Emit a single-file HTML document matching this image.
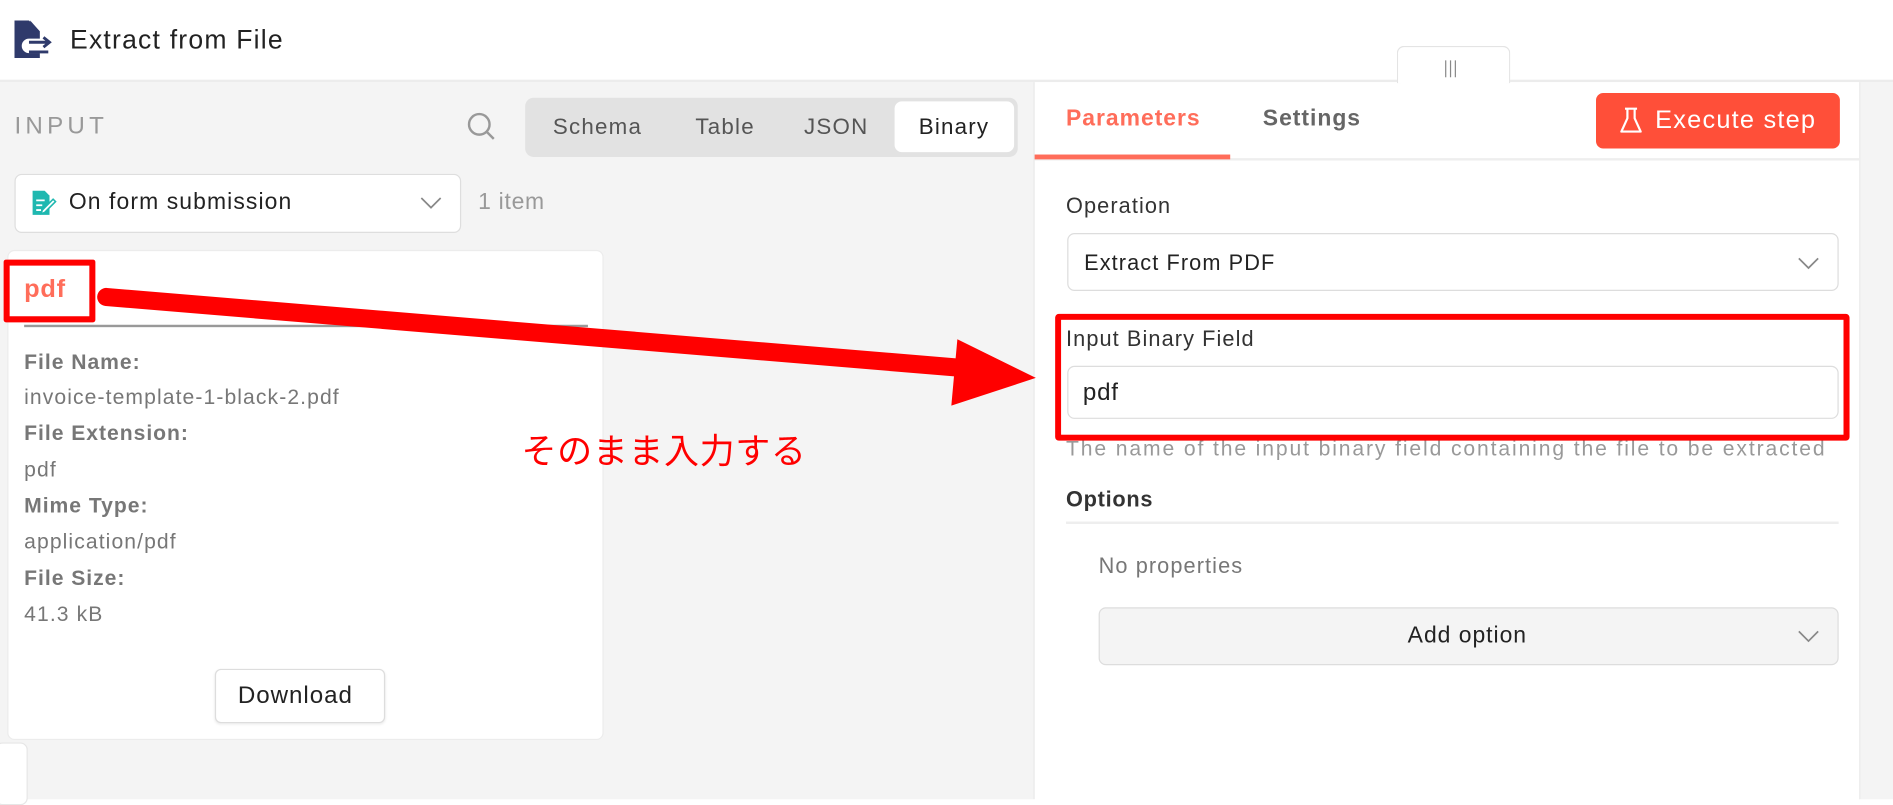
<!DOCTYPE html>
<html><head><meta charset="utf-8"><style>
html,body{margin:0;padding:0;width:1893px;height:799px;overflow:hidden;background:#fff}
#s{position:absolute;left:0;top:0;width:1568px;height:662px;transform:scale(1.20727);transform-origin:0 0;font-family:"Liberation Sans","Noto Sans CJK JP",sans-serif;color:#333;letter-spacing:0.6px}
.a{position:absolute;white-space:nowrap}
.c{transform:translateY(-50%)}
.lab{color:#777;font-weight:bold;font-size:17.5px;letter-spacing:0.8px}
.val{color:#777;font-size:17.5px;letter-spacing:0.9px}
</style></head><body><div id="s">
<svg class="a" style="left:10px;top:16px" width="38" height="34" viewBox="0 0 38 34">
<path d="M2 1h12l9 9v6h-9a6 6 0 0 0 0 12h9v4H2z" fill="#2f3a6b"/>
<path d="M15 1v9h8z" fill="#2f3a6b"/>
<path d="M14 19h16M26 15l5 4-5 4M30 27H14" stroke="#2f3a6b" stroke-width="2.4" fill="none"/>
</svg>
<div class="a c" style="left:58px;top:33px;font-size:22px;color:#222;letter-spacing:1px">Extract from File</div>
<div class="a" style="left:0;top:66px;width:1568px;height:2px;background:#ececec"></div>
<div class="a" style="left:1157px;top:38px;width:92px;height:30px;background:#fff;border:1px solid #e4e4e4;border-bottom:none;border-radius:6px 6px 0 0"></div>
<div class="a" style="left:1197px;top:50px;width:1px;height:14px;background:#888;box-shadow:4px 0 #888,8px 0 #888"></div>
<div class="a" style="left:0;top:68px;width:856px;height:594px;background:#f4f4f4"></div>
<div class="a c" style="left:12px;top:105px;font-size:20px;letter-spacing:3.5px;color:#999">INPUT</div>
<svg class="a" style="left:386px;top:92px" width="26" height="26" viewBox="0 0 26 26"><circle cx="11" cy="11" r="8.5" stroke="#999" stroke-width="2" fill="none"/><path d="M17 17l6 6" stroke="#999" stroke-width="2"/></svg>
<div class="a" style="left:435px;top:81px;width:408px;height:49px;background:#e2e2e2;border-radius:7px"></div>
<div class="a" style="left:741px;top:84px;width:99px;height:42px;background:#fff;border-radius:6px"></div>
<div class="a c" style="left:458px;top:105px;font-size:18.5px;color:#555;letter-spacing:1px">Schema</div>
<div class="a c" style="left:576px;top:105px;font-size:18.5px;color:#555;letter-spacing:1px">Table</div>
<div class="a c" style="left:666px;top:105px;font-size:18.5px;color:#555;letter-spacing:1px">JSON</div>
<div class="a c" style="left:761px;top:105px;font-size:18.5px;color:#222;letter-spacing:1px">Binary</div>
<div class="a" style="left:12px;top:144px;width:368px;height:47px;background:#fff;border:1px solid #dedede;border-radius:6px"></div>
<svg class="a" style="left:26px;top:157px" width="22" height="22" viewBox="0 0 22 22"><path d="M1 1h10l4 4v16H1z" fill="#1fb8b0"/><path d="M4 9h7M4 13h5M4 17h4" stroke="#fff" stroke-width="1.5"/><path d="M9 17l9-9 2 2-9 9-3 1z" fill="#fff" stroke="#1fb8b0" stroke-width="1.3"/></svg>
<div class="a c" style="left:57px;top:168px;font-size:19px;color:#222;letter-spacing:0.9px">On form submission</div>
<svg class="a" style="left:348px;top:162px" width="18" height="12"><path d="M1 2l8 8 8-8" stroke="#888" stroke-width="1.4" fill="none"/></svg>
<div class="a c" style="left:396px;top:168px;font-size:19px;color:#999">1 item</div>
<div class="a" style="left:6px;top:207px;width:494px;height:406px;background:#fff;border:1px solid #ececec;border-radius:6px;box-sizing:border-box"></div>
<div class="a c" style="left:20px;top:240px;font-size:21px;color:#ff6d5a;font-weight:bold">pdf</div>
<div class="a" style="left:20px;top:269px;width:467px;height:2px;background:#999"></div>
<div class="a c lab" style="left:20px;top:300px">File Name:</div>
<div class="a c val" style="left:20px;top:329px">invoice-template-1-black-2.pdf</div>
<div class="a c lab" style="left:20px;top:359px">File Extension:</div>
<div class="a c val" style="left:20px;top:389px">pdf</div>
<div class="a c lab" style="left:20px;top:419px">Mime Type:</div>
<div class="a c val" style="left:20px;top:449px">application/pdf</div>
<div class="a c lab" style="left:20px;top:479px">File Size:</div>
<div class="a c val" style="left:20px;top:509px">41.3 kB</div>
<div class="a" style="left:178px;top:554px;width:141px;height:45px;background:#fff;border:1px solid #ddd;border-radius:5px;box-sizing:border-box;box-shadow:0 1px 2px rgba(0,0,0,.08)"></div>
<div class="a c" style="left:197px;top:577px;font-size:20px;color:#222;letter-spacing:0.8px">Download</div>
<div class="a" style="left:-4px;top:615px;width:25px;height:50px;background:#fff;border:1px solid #e6e6e6;border-radius:6px"></div>
<div class="a" style="left:856px;top:68px;width:1px;height:594px;background:#e8e8e8"></div>
<div class="a" style="left:1540px;top:68px;width:28px;height:594px;background:#f4f4f4;border-left:1px solid #ececec"></div>
<div class="a c" style="left:883px;top:99px;font-size:19px;color:#ff6d5a;font-weight:bold;letter-spacing:0.8px">Parameters</div>
<div class="a c" style="left:1046px;top:99px;font-size:19px;color:#666;font-weight:bold;letter-spacing:0.8px">Settings</div>
<div class="a" style="left:857px;top:131px;width:683px;height:2px;background:#eee"></div>
<div class="a" style="left:857px;top:128px;width:162px;height:4px;background:#ff6d5a"></div>
<div class="a" style="left:1322px;top:77px;width:202px;height:46px;background:#ff4f39;border-radius:6px"></div>
<svg class="a" style="left:1341px;top:88px" width="20" height="24" viewBox="0 0 20 24"><path d="M7 2v8L2 21h16l-5-11V2M5 2h10" stroke="#fff" stroke-width="1.8" fill="none" stroke-linejoin="round"/></svg>
<div class="a c" style="left:1371px;top:100px;font-size:21px;color:#fff;letter-spacing:1px">Execute step</div>
<div class="a c" style="left:883px;top:171px;font-size:18px;color:#333;letter-spacing:0.9px">Operation</div>
<div class="a" style="left:884px;top:193px;width:639px;height:48px;background:#fff;border:1px solid #ddd;border-radius:6px;box-sizing:border-box"></div>
<div class="a c" style="left:898px;top:218px;font-size:18px;color:#222;letter-spacing:0.9px">Extract From PDF</div>
<svg class="a" style="left:1489px;top:212px" width="18" height="12"><path d="M1 2l8 8 8-8" stroke="#888" stroke-width="1.4" fill="none"/></svg>
<div class="a c" style="left:883px;top:372px;font-size:17.5px;color:#999;letter-spacing:1.55px">The name of the input binary field containing the file to be extracted</div>
<div class="a" style="left:874px;top:260px;width:658px;height:105px;border:5px solid #f00;box-sizing:border-box;border-radius:3px"></div>
<div class="a" style="left:879px;top:265px;width:648px;height:95px;background:#fff"></div>
<div class="a c" style="left:883px;top:281px;font-size:18px;color:#333;letter-spacing:0.9px">Input Binary Field</div>
<div class="a" style="left:884px;top:303px;width:639px;height:44px;background:#fff;border:1px solid #ddd;border-radius:6px;box-sizing:border-box"></div>
<div class="a c" style="left:897px;top:326px;font-size:20px;color:#222">pdf</div>
<div class="a c" style="left:883px;top:414px;font-size:18px;color:#333;font-weight:bold">Options</div>
<div class="a" style="left:883px;top:432px;width:640px;height:2px;background:#eee"></div>
<div class="a c" style="left:910px;top:469px;font-size:18px;color:#777;letter-spacing:0.9px">No properties</div>
<div class="a" style="left:910px;top:503px;width:613px;height:48px;background:#f4f4f4;border:1px solid #ddd;border-radius:6px;box-sizing:border-box"></div>
<div class="a c" style="left:1166px;top:527px;font-size:19px;color:#222;letter-spacing:0.8px">Add option</div>
<svg class="a" style="left:1489px;top:521px" width="18" height="12"><path d="M1 2l8 8 8-8" stroke="#888" stroke-width="1.4" fill="none"/></svg>
<div class="a" style="left:3px;top:215px;width:76px;height:52px;border:5px solid #f00;box-sizing:border-box;border-radius:2px"></div>
<svg class="a" style="left:0;top:0" width="1568" height="662"><path d="M88 246L800 305" stroke="#f00" stroke-width="15" stroke-linecap="round"/><path d="M793 281L858 313L788 336Z" fill="#f00"/></svg>
<div class="a c" style="left:432px;top:372px;font-size:29px;color:#f00;letter-spacing:0.5px">そのまま入力する</div>
</div></body></html>
